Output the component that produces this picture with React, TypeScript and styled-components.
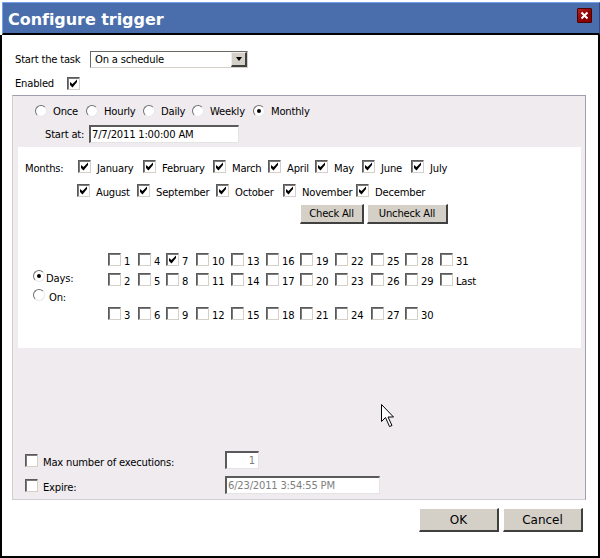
import React from "react";
import styled, { createGlobalStyle } from "styled-components";

const GlobalStyle = createGlobalStyle`
  html, body {
    margin: 0;
    padding: 0;
    background: #fff;
  }
  body {
    font-family: "DejaVu Sans", "Noto Sans", sans-serif;
    font-size: 10px;
    letter-spacing: -0.2px;
    color: #000;
  }
`;

const Window = styled.div`
  position: relative;
  width: 600px;
  height: 558px;
  box-sizing: border-box;
  padding-top: 2px;
  background: #fff;
  overflow: hidden;
  display: flex;
  flex-direction: column;
`;

const TitleBar = styled.div`
  height: 33px;
  box-sizing: border-box;
  flex: none;
  margin-left: 2px;
  background: #4a6eac;
  border-top: 1px solid #76a0ee;
  border-left: 1px solid #76a0ee;
  border-right: 1px solid #2b4a80;
  border-bottom: 2px solid #000;
  display: flex;
  align-items: center;
  justify-content: space-between;
  padding: 0 7px 0 5px;
`;

const Title = styled.div`
  color: #fff;
  font-weight: 700;
  font-size: 16px;
  letter-spacing: -0.05px;
  margin-top: 3px;
`;

const CloseButton = styled.div`
  width: 15px;
  height: 15px;
  margin-bottom: 5px;
  box-sizing: border-box;
  background: linear-gradient(135deg, #b82020, #8a0000 60%);
  border: 1px solid #4d0000;
  border-radius: 1px;
  display: flex;
  align-items: center;
  justify-content: center;
`;

const Body = styled.div`
  flex: 1;
  border-left: 2px solid #000;
  border-right: 2px solid #000;
  border-bottom: 2px solid #000;
  padding: 15px 12px 0 10px;
  display: flex;
  flex-direction: column;
`;

const TopRow = styled.div<{ $top?: number }>`
  display: flex;
  align-items: center;
  height: 18px;
  padding-left: 3px;
  margin-top: ${(p) => p.$top ?? 0}px;
`;

const TopLabel = styled.span<{ $width: number }>`
  width: ${(p) => p.$width}px;
  flex: none;
`;

const Select = styled.div`
  width: 158px;
  height: 17px;
  box-sizing: border-box;
  border-top: 1px solid #6a6a64;
  border-left: 1px solid #6a6a64;
  border-right: 1px solid #d4d0c8;
  border-bottom: 1px solid #d4d0c8;
  background: #fff;
  display: flex;
  align-items: center;
  justify-content: space-between;
  padding-left: 4px;
`;

const SelectArrow = styled.div`
  width: 16px;
  height: 15px;
  box-sizing: border-box;
  background: #d4d0c8;
  border-top: 1px solid #eee;
  border-left: 1px solid #eee;
  border-right: 2px solid #404040;
  border-bottom: 2px solid #404040;
  display: flex;
  align-items: center;
  justify-content: center;
  &::after {
    content: "";
    border-left: 3.5px solid transparent;
    border-right: 3.5px solid transparent;
    border-top: 4px solid #000;
  }
`;

const Box = styled.span`
  width: 13px;
  height: 13px;
  flex: none;
  box-sizing: border-box;
  background: #fff;
  border-top: 1px solid #5a5a5a;
  border-left: 1px solid #5a5a5a;
  border-right: 1px solid #d4d0c8;
  border-bottom: 1px solid #d4d0c8;
  box-shadow: inset 1px 1px 0 #7a7a7a;
  display: inline-flex;
  align-items: center;
  justify-content: center;
`;

const Tick = () => (
  <svg width="9" height="9" viewBox="0 0 9 9">
    <path d="M1 3v3l2.5 2.5L8 3V0.5L3.5 5z" fill="#000" />
  </svg>
);

const Check: React.FC<{ checked?: boolean }> = ({ checked }) => (
  <Box>{checked && <Tick />}</Box>
);

const RadioCircle = styled.span<{ $on?: boolean }>`
  width: 12px;
  height: 12px;
  flex: none;
  box-sizing: border-box;
  border-radius: 50%;
  background: #fff;
  border: 1px solid;
  border-color: #707070 #e8e8e8 #e8e8e8 #707070;
  display: inline-flex;
  align-items: center;
  justify-content: center;
  &::after {
    content: "";
    display: ${(p) => (p.$on ? "block" : "none")};
    width: 4px;
    height: 4px;
    border-radius: 50%;
    background: #000;
  }
`;

/* caption sitting a little below the centre of its checkbox */
const Caption = styled.span`
  margin-top: 4px;
`;

const Panel = styled.div`
  margin-top: 3px;
  height: 405px;
  box-sizing: border-box;
  background: #efebef;
  border: 1px solid;
  border-color: #a09eae #a09eae #cfcfcf #cfcfcf;
  padding: 0 4px 0 5px;
  display: flex;
  flex-direction: column;
`;

const ScheduleRow = styled.div`
  display: flex;
  align-items: center;
  height: 16px;
  margin-top: 7px;
  padding-left: 17px;
`;

const ScheduleOption = styled.label<{ $width: number }>`
  width: ${(p) => p.$width}px;
  display: flex;
  align-items: center;
  gap: 6px;
`;

const StartRow = styled.div`
  display: flex;
  align-items: center;
  height: 20px;
  margin-top: 5px;
  padding-left: 27px;
`;

const TextInput = styled.div<{ $width: number; $disabled?: boolean; $right?: boolean }>`
  width: ${(p) => p.$width}px;
  height: 18px;
  box-sizing: border-box;
  background: #fff;
  border-top: 2px solid #5a5a5a;
  border-left: 2px solid #5a5a5a;
  border-right: 1px solid #e4e4e4;
  border-bottom: 1px solid #e4e4e4;
  display: flex;
  align-items: center;
  padding: 0 3px 0 1px;
  color: ${(p) => (p.$disabled ? "#808080" : "#000")};
  justify-content: ${(p) => (p.$right ? "flex-end" : "flex-start")};
`;

const WhiteBox = styled.div`
  background: #fff;
  height: 201px;
  margin-top: 3px;
  box-sizing: border-box;
  padding: 13px 0 0 7px;
  display: flex;
  flex-direction: column;
`;

const MonthRow = styled.div<{ $top?: number }>`
  display: flex;
  align-items: center;
  height: 13px;
  margin-top: ${(p) => p.$top ?? 0}px;
`;

const MonthLabel = styled.span<{ $width: number }>`
  width: ${(p) => p.$width}px;
  flex: none;
  margin-top: 4px;
`;

const MonthItem = styled.label<{ $width: number }>`
  width: ${(p) => p.$width}px;
  flex: none;
  display: flex;
  align-items: center;
  gap: 6px;
  white-space: nowrap;
`;

const ButtonRow = styled.div`
  display: flex;
  gap: 3px;
  margin: 7px 0 0 275px;
`;

const Button = styled.button<{ $width: number; $height: number; $size: number }>`
  width: ${(p) => p.$width}px;
  height: ${(p) => p.$height}px;
  padding: 0;
  background: #d4d0c8;
  border-style: solid;
  border-width: 1px 2px 2px 1px;
  border-color: #fff #404040 #404040 #fff;
  font-family: inherit;
  font-size: ${(p) => p.$size}px;
  letter-spacing: ${(p) => (p.$size > 10 ? 0 : -0.2)}px;
  color: #000;
`;

const DaysSection = styled.div`
  display: flex;
  margin-top: 29px;
`;

const DayModes = styled.div`
  width: 75px;
  flex: none;
  padding: 17px 0 0 8px;
  display: flex;
  flex-direction: column;
  gap: 7px;
`;

const DayMode = styled.label<{ $gap: number }>`
  display: flex;
  align-items: center;
  gap: ${(p) => p.$gap}px;
  height: 12px;
`;

const DayGrid = styled.div`
  display: grid;
  grid-template-columns: 30px 28px 30px 35px 35px 34px 35px 36px 34px 35px auto;
  grid-template-rows: 20px 34px 20px;
`;

const DayCell = styled.label`
  display: flex;
  align-items: flex-start;
  gap: 3px;
  white-space: nowrap;
  line-height: 18px;
`;

const LowerRow = styled.div<{ $top: number }>`
  display: flex;
  align-items: center;
  margin-top: ${(p) => p.$top}px;
  padding-left: 7px;
`;

const LowerLabel = styled.label`
  width: 200px;
  flex: none;
  display: flex;
  align-items: center;
  gap: 5px;
`;

const Footer = styled.div`
  display: flex;
  justify-content: flex-end;
  gap: 4px;
  margin-top: 8px;
  padding-right: 3px;
`;

const Cursor = styled.svg`
  position: absolute;
  left: 381px;
  top: 404px;
`;

const months1 = [
  ["January", 65],
  ["February", 70],
  ["March", 55],
  ["April", 47],
  ["May", 47],
  ["June", 49],
  ["July", 50],
] as const;

const months2 = [
  ["August", 60],
  ["September", 79],
  ["October", 67],
  ["November", 73],
  ["December", 80],
] as const;

const dayRows = [
  ["1", "4", "7", "10", "13", "16", "19", "22", "25", "28", "31"],
  ["2", "5", "8", "11", "14", "17", "20", "23", "26", "29", "Last"],
  ["3", "6", "9", "12", "15", "18", "21", "24", "27", "30"],
];

const schedule = [
  ["Once", 51, false],
  ["Hourly", 57, false],
  ["Daily", 49, false],
  ["Weekly", 61, false],
  ["Monthly", 70, true],
] as const;

export default function App() {
  return (
    <>
      <GlobalStyle />
      <Window>
        <TitleBar>
          <Title>Configure trigger</Title>
          <CloseButton>
            <svg width="9" height="9" viewBox="0 0 9 9">
              <path d="M1.5 1.5l6 6M7.5 1.5l-6 6" stroke="#fff" strokeWidth="2" />
            </svg>
          </CloseButton>
        </TitleBar>
        <Body>
          <TopRow>
            <TopLabel $width={75}>Start the task</TopLabel>
            <Select>
              On a schedule
              <SelectArrow />
            </Select>
          </TopRow>
          <TopRow $top={6}>
            <TopLabel $width={52}>Enabled</TopLabel>
            <Check checked />
          </TopRow>
          <Panel>
            <ScheduleRow>
              {schedule.map(([name, width, on]) => (
                <ScheduleOption key={name} $width={width}>
                  <RadioCircle $on={on} />
                  {name}
                </ScheduleOption>
              ))}
            </ScheduleRow>
            <StartRow>
              <TopLabel $width={44}>Start at:</TopLabel>
              <TextInput $width={150}>7/7/2011 1:00:00 AM</TextInput>
            </StartRow>
            <WhiteBox>
              <MonthRow>
                <MonthLabel $width={53}>Months:</MonthLabel>
                {months1.map(([name, width]) => (
                  <MonthItem key={name} $width={width}>
                    <Check checked />
                    <Caption>{name}</Caption>
                  </MonthItem>
                ))}
              </MonthRow>
              <MonthRow $top={11}>
                <MonthLabel $width={52} />
                {months2.map(([name, width]) => (
                  <MonthItem key={name} $width={width}>
                    <Check checked />
                    <Caption>{name}</Caption>
                  </MonthItem>
                ))}
              </MonthRow>
              <ButtonRow>
                <Button $width={64} $height={20} $size={10}>Check All</Button>
                <Button $width={81} $height={20} $size={10}>Uncheck All</Button>
              </ButtonRow>
              <DaysSection>
                <DayModes>
                  <DayMode $gap={1}>
                    <RadioCircle $on />
                    <Caption>Days:</Caption>
                  </DayMode>
                  <DayMode $gap={4}>
                    <RadioCircle />
                    <Caption>On:</Caption>
                  </DayMode>
                </DayModes>
                <DayGrid>
                  {dayRows.flat().map((day) => (
                    <DayCell key={day}>
                      <Check checked={day === "7"} />
                      {day}
                    </DayCell>
                  ))}
                </DayGrid>
              </DaysSection>
            </WhiteBox>
            <LowerRow $top={103}>
              <LowerLabel>
                <Check />
                <Caption>Max number of executions:</Caption>
              </LowerLabel>
              <TextInput $width={34} $disabled $right>1</TextInput>
            </LowerRow>
            <LowerRow $top={7}>
              <LowerLabel>
                <Check />
                <Caption>Expire:</Caption>
              </LowerLabel>
              <TextInput $width={155} $disabled>6/23/2011 3:54:55 PM</TextInput>
            </LowerRow>
          </Panel>
          <Footer>
            <Button $width={80} $height={24} $size={12}>OK</Button>
            <Button $width={80} $height={24} $size={12}>Cancel</Button>
          </Footer>
        </Body>
        <Cursor width="13" height="24" viewBox="0 0 13 24">
          <path d="M.5.5v17l4-4 4 9 2.5-1-4-8.5h5.5z" fill="#fff" stroke="#000" />
        </Cursor>
      </Window>
    </>
  );
}
